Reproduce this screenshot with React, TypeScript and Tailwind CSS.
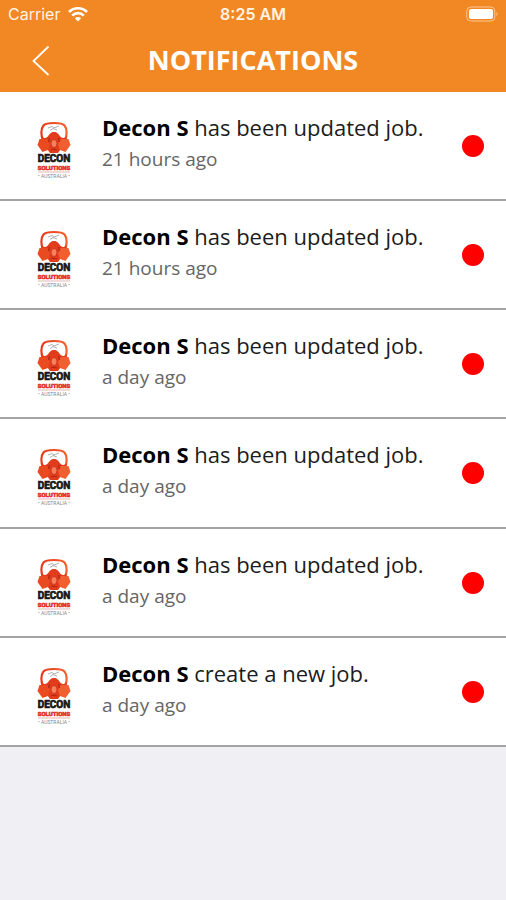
const NOTIFICATIONS = [
  { id: 1, name: "Decon S", text: "has been updated job.", time: "21 hours ago" },
  { id: 2, name: "Decon S", text: "has been updated job.", time: "21 hours ago" },
  { id: 3, name: "Decon S", text: "has been updated job.", time: "a day ago" },
  { id: 4, name: "Decon S", text: "has been updated job.", time: "a day ago" },
  { id: 5, name: "Decon S", text: "has been updated job.", time: "a day ago" },
  { id: 6, name: "Decon S", text: "create a new job.", time: "a day ago" },
];

function StatusBar() {
  return (
    <div className="grid h-7 grid-cols-3 items-center px-2 font-['Inter','Liberation_Sans',sans-serif] text-base text-[#fff3e4]">
      <div className="flex items-center gap-2">
        <span>Carrier</span>
        <svg className="h-4 w-5" viewBox="0 0 20 16" fill="none" stroke="#fff" strokeWidth="2.7">
          <path d="M1 6C6 1 14 1 19 6" />
          <path d="M4.2 9.6C7.5 6.3 12.5 6.3 15.8 9.6" />
          <path d="M6.8 12.2c1.8-1.7 4.6-1.7 6.4 0L10 15.5z" fill="#fff" stroke="none" />
        </svg>
      </div>
      <span className="text-center font-semibold">8:25 AM</span>
      <svg className="h-4 w-8 justify-self-end" viewBox="0 0 32 16" fill="none">
        <rect x=".8" y="1" width="28" height="14" rx="4" stroke="#f9c798" />
        <rect x="3" y="3" width="24" height="10" rx="2" fill="#fff" />
        <path d="M30.5 6v4c1.4-.8 1.4-3.2 0-4z" fill="#f9c798" />
      </svg>
    </div>
  );
}

function Header() {
  return (
    <header className="bg-[#f18824] text-white">
      <StatusBar />
      <div className="grid h-16 grid-cols-[80px_1fr_80px] items-center">
        <button type="button" aria-label="Back" className="flex h-16 items-center pl-8">
          <svg className="h-8 w-5" viewBox="0 0 20 32" fill="none" stroke="#fff" strokeWidth="1.8">
            <path d="M16.5 2.5 1.5 17l15 14" />
          </svg>
        </button>
        <h1 className="text-center text-[27px] font-bold">NOTIFICATIONS</h1>
      </div>
    </header>
  );
}

function DeconLogo() {
  return (
    <svg className="h-[60px] w-9" viewBox="0 0 36 60" aria-hidden="true">
      <defs>
        <linearGradient id="hood" x1="0" y1="0" x2="1" y2="0">
          <stop offset="0" stopColor="#e8381c" />
          <stop offset="1" stopColor="#f4622e" />
        </linearGradient>
      </defs>
      <path
        d="M7 20C5 16 4.5 9 7.5 5.5 9.5 3.2 13 3 18 3s8.5.2 10.5 2.5C31.5 9 31 16 29 20"
        fill="#fff"
        stroke="url(#hood)"
        strokeWidth="2.2"
      />
      <path d="M12 8l4-1.5 2 1.5 5-2M14 10.5l3-2 4 1.5" fill="none" stroke="#999" strokeWidth=".8" />
      <path
        d="M5.5 16c2 3 5.500 2.500 7-.5 1-2 3-3 4-3.5h3c1 .5 3 1.5 4 3.5 1.5 3 5 3.5 7 .5l1 12-7 1.5L22 33h-8l-2.5-3.5-7-1.5z"
        fill="#e23c1c"
      />
      <path d="M3.5 19H11l3 5-2 6-5.5 2-5-7z" fill="#ea4a20" />
      <path d="M32.5 19H25l-3 5 2 6 5.5 2 5-7z" fill="#f15f30" />
      <path d="M13.5 18l-1 4M22.5 18l1 4M15 30c1.5-1 4.5-1 6 0" fill="none" stroke="#a8230f" />
      <ellipse cx="18" cy="23.5" rx="3" ry="4" fill="#f4805c" stroke="#c72f18" strokeWidth=".8" />
      <g className="font-['Roboto',sans-serif] font-bold">
        <text x="18" y="42" textAnchor="middle" className="fill-[#171717] text-[10px]" stroke="#171717" strokeWidth=".7">
          DECON
        </text>
        <text x="18" y="50" textAnchor="middle" className="fill-[#e5322d] text-[6px]" stroke="#e5322d" strokeWidth=".6">
          SOLUTIONS
        </text>
        <path d="M2 52h32" stroke="#d9a5a0" strokeWidth=".8" />
        <text x="18" y="58" textAnchor="middle" className="fill-[#888] text-[5px] font-normal">
          • AUSTRALIA •
        </text>
      </g>
    </svg>
  );
}

export default function App() {
  return (
    <main className="min-h-screen bg-[#efeff4] font-['Open_Sans',sans-serif]">
      <Header />
      <ul className="grid min-h-[655px] auto-rows-fr">
        {NOTIFICATIONS.map((item) => (
          <li
            key={item.id}
            className="flex items-start border-b-2 border-[#a3a3a3] bg-white pr-[22px] pl-9"
          >
            <div className="shrink-0 pt-7">
              <DeconLogo />
            </div>
            <div className="min-w-0 flex-1 pt-[19px] pl-[30px]">
              <p className="text-[22px] leading-8 text-[#1c1c1c]">
                <strong className="font-bold text-black">{item.name}</strong> {item.text}
              </p>
              <p className="text-[19px] leading-8 text-[#666]">{item.time}</p>
            </div>
            <span className="mt-[43px] size-[22px] shrink-0 rounded-full bg-[#fe0000]" />
          </li>
        ))}
      </ul>
    </main>
  );
}
